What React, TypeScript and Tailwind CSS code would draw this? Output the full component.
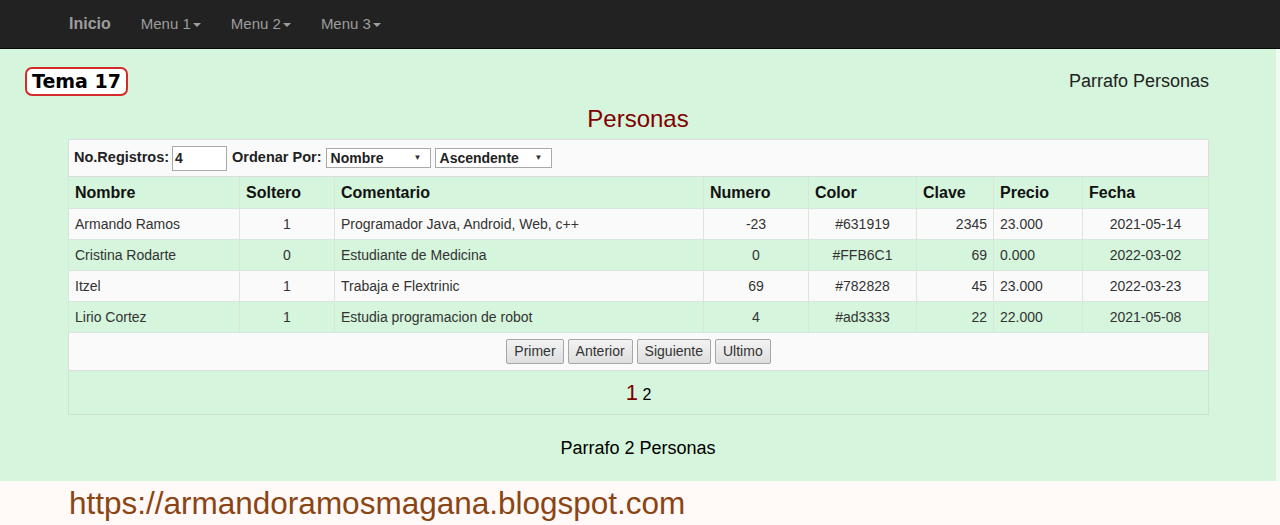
import React from "react";

type Persona = {
  nombre: string;
  soltero: number;
  comentario: string;
  numero: number;
  color: string;
  clave: number;
  precio: string;
  fecha: string;
};

const personas: Persona[] = [
  { nombre: "Armando Ramos", soltero: 1, comentario: "Programador Java, Android, Web, c++", numero: -23, color: "#631919", clave: 2345, precio: "23.000", fecha: "2021-05-14" },
  { nombre: "Cristina Rodarte", soltero: 0, comentario: "Estudiante de Medicina", numero: 0, color: "#FFB6C1", clave: 69, precio: "0.000", fecha: "2022-03-02" },
  { nombre: "Itzel", soltero: 1, comentario: "Trabaja e Flextrinic", numero: 69, color: "#782828", clave: 45, precio: "23.000", fecha: "2022-03-23" },
  { nombre: "Lirio Cortez", soltero: 1, comentario: "Estudia programacion de robot", numero: 4, color: "#ad3333", clave: 22, precio: "22.000", fecha: "2021-05-08" },
];

const headers = ["Nombre", "Soltero", "Comentario", "Numero", "Color", "Clave", "Precio", "Fecha"];
const widths = ["w-[171px]", "w-[95px]", "w-[369px]", "w-[105px]", "w-[108px]", "w-[77px]", "w-[89px]", "w-[126px]"];

function Caret() {
  return (
    <span className="ml-[2px] inline-block h-0 w-0 border-x-[4px] border-t-[4px] border-x-transparent border-t-[#9d9d9d] align-middle" />
  );
}

function NavBar() {
  return (
    <nav className="flex h-[49px] items-center border-b border-[#080808] bg-[#222222] pl-[54px] text-[15px] text-[#9d9d9d]">
      <span className="px-[15px] text-[16px] font-bold">Inicio</span>
      <span className="px-[15px]">
        Menu 1<Caret />
      </span>
      <span className="px-[15px]">
        Menu 2<Caret />
      </span>
      <span className="px-[15px]">
        Menu 3<Caret />
      </span>
    </nav>
  );
}

function SelectBox({ value, width }: { value: string; width: string }) {
  return (
    <span
      className={`${width} flex h-[20px] items-center justify-between border border-[#a9a9a9] bg-white pl-[4px] pr-[8px] text-[14px] font-bold text-[#222]`}
    >
      {value}
      <span className="text-[8px] font-normal text-[#333]">▼</span>
    </span>
  );
}

function NavButton({ label }: { label: string }) {
  return (
    <span className="flex h-[25px] items-center rounded-[2px] border border-[#a6a6a6] bg-gradient-to-b from-[#f3f3f3] to-[#dedede] px-[7px] text-[14px] text-[#333]">
      {label}
    </span>
  );
}

export default function App() {
  const cell = "border border-[#d9e6dc] px-[6px] text-[14px] text-[#333]";
  return (
    <div className="flex min-h-[525px] flex-col font-['Liberation_Sans',Arial,sans-serif]">
      <NavBar />
      <div className="flex">
        <main className="flex-1 bg-[#d5f5dc]">
          {/* encabezado */}
          <div className="flex items-center justify-between pl-[25px] pr-[67px] pt-[18px]">
            <span className="flex h-[29px] items-center rounded-[7px] border-2 border-[#d52a2a] bg-white px-[5px] font-['DejaVu_Sans',sans-serif] text-[19px] font-bold text-black">
              Tema 17
            </span>
            <span className="text-[18px] text-[#222]">Parrafo Personas</span>
          </div>

          <h2 className="mb-[5px] mt-[8px] text-center text-[24px] leading-[30px] text-[#800000]">Personas</h2>

          <div className="mx-auto w-[1140px]">
            <table className="w-full table-fixed border-collapse border border-[#dcdcdc]">
              <colgroup>
                {widths.map((w, i) => (
                  <col key={i} className={w} />
                ))}
              </colgroup>
              <thead>
                <tr className="h-[37px] bg-[#fafafa]">
                  <td colSpan={8} className="border border-[#dcdcdc] px-[5px]">
                    <div className="flex items-center gap-[4px] text-[14.5px] font-bold text-[#222]">
                      <span>No.Registros:</span>
                      <span className="-ml-[1px] flex h-[25px] w-[55px] items-center border border-[#a9a9a9] bg-white pl-[2px] text-[14px] font-bold">
                        4
                      </span>
                      <span className="ml-[1px]">Ordenar Por:</span>
                      <SelectBox value="Nombre" width="w-[105px]" />
                      <SelectBox value="Ascendente" width="w-[117px]" />
                    </div>
                  </td>
                </tr>
                <tr className="h-[32px] bg-[#d5f5dc]">
                  {headers.map((h) => (
                    <th key={h} className="border border-[#d9e6dc] px-[6px] text-left text-[16px] font-bold text-[#111]">
                      {h}
                    </th>
                  ))}
                </tr>
              </thead>
              <tbody>
                {personas.map((p, i) => (
                  <tr key={p.nombre} className={`h-[31px] ${i % 2 === 0 ? "bg-[#fafafa]" : "bg-[#d5f5dc]"}`}>
                    <td className={cell}>{p.nombre}</td>
                    <td className={`${cell} text-center`}>{p.soltero}</td>
                    <td className={cell}>{p.comentario}</td>
                    <td className={`${cell} text-center`}>{p.numero}</td>
                    <td className={`${cell} text-center`}>{p.color}</td>
                    <td className={`${cell} text-right`}>{p.clave}</td>
                    <td className={`${cell} px-[5px]`}>{p.precio}</td>
                    <td className={`${cell} text-center`}>{p.fecha}</td>
                  </tr>
                ))}
                <tr className="h-[38px] bg-[#fafafa]">
                  <td colSpan={8} className="border border-[#dcdcdc]">
                    <div className="flex justify-center gap-[4px]">
                      <NavButton label="Primer" />
                      <NavButton label="Anterior" />
                      <NavButton label="Siguiente" />
                      <NavButton label="Ultimo" />
                    </div>
                  </td>
                </tr>
                <tr className="h-[44px] bg-[#d5f5dc]">
                  <td colSpan={8} className="border border-[#d0e2d4] text-center">
                    <span className="text-[22px] text-[#800000]">1</span>{" "}
                    <span className="text-[16px] text-black">2</span>
                  </td>
                </tr>
              </tbody>
            </table>
          </div>

          <div className="flex h-[66px] items-center justify-center text-[18px] text-black">Parrafo 2 Personas</div>
        </main>
        <div className="w-[4px] bg-[#f0fbf2]" />
      </div>
      <footer className="flex flex-1 items-center bg-[#fffaf8] pl-[69px]">
        <span className="text-[31.5px] leading-[36px] text-[#8b4513]">https://armandoramosmagana.blogspot.com</span>
      </footer>
    </div>
  );
}
